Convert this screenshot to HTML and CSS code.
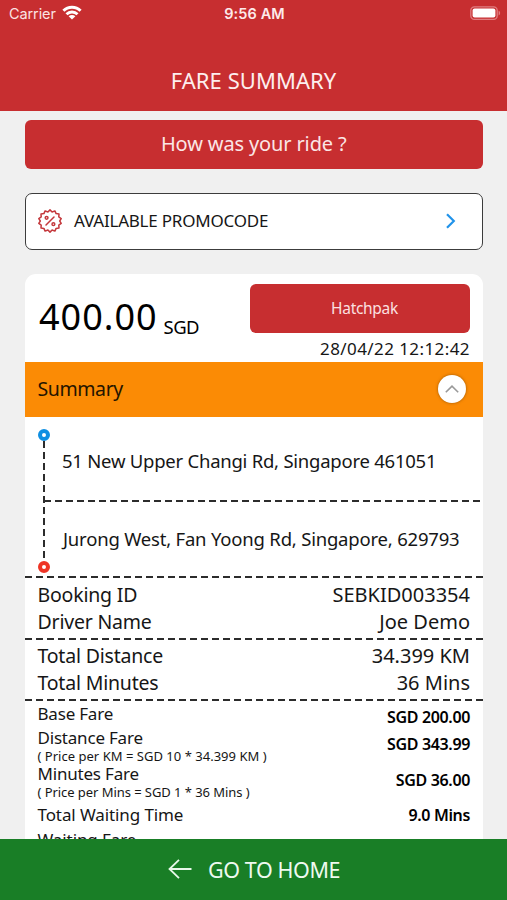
FILE: index.html
```
<!DOCTYPE html>
<html lang="en">
<head>
<meta charset="utf-8">
<title>Fare Summary</title>
<link rel="stylesheet" href="styles.css">
</head>
<body>
<div class="screen">
  <header class="header">
    <div class="status">
      <div class="carrier"><span>Carrier</span>
        <svg width="20" height="15" viewBox="0 0 20 15" fill="none" stroke="#fff" stroke-width="2.9"><path d="M1.4 5.8C6.2 1 13.8 1 18.6 5.8M4.5 9.3C7.6 6.2 12.4 6.2 15.5 9.3"/><path d="M10 14.6 6.6 11.3C8.6 9.5 11.4 9.5 13.4 11.3Z" fill="#fff" stroke="none"/></svg>
      </div>
      <span class="clock">9:56 AM</span>
      <svg class="battery" width="31" height="15" viewBox="0 0 31 15"><rect x=".8" y=".8" width="26.4" height="12.6" rx="3.6" fill="none" stroke="#e07d80" stroke-width="1.3"/><rect x="2.6" y="2.6" width="22.8" height="9" rx="2" fill="#fff"/><path d="M28.6 4.8C30.6 5.4 30.6 8.8 28.6 9.4Z" fill="#e07d80"/></svg>
    </div>
    <h1 class="title">FARE SUMMARY</h1>
  </header>
  <main class="content">
    <button class="rate">How was your ride ?</button>
    <div class="promo">
      <svg width="24" height="24" viewBox="0 0 24 24" fill="none" stroke="#c4383c" stroke-width="1.5" stroke-linejoin="round" stroke-linecap="round"><path d="M12 .9 14.1 3 16.9 1.9 18.1 4.6 21 5 20.8 7.9 23.2 9.6 21.7 12 23.2 14.4 20.8 16.1 21 19 18.1 19.4 16.9 22.1 14.1 21 12 23.1 9.9 21 7.1 22.1 5.9 19.4 3 19 3.2 16.1 .8 14.4 2.3 12 .8 9.6 3.2 7.9 3 5 5.9 4.6 7.1 1.9 9.9 3Z"/><path d="M8 16 16 8"/><circle cx="8.6" cy="8.8" r="1.4"/><circle cx="15.4" cy="15.2" r="1.4"/></svg>
      <span class="promo-label">AVAILABLE PROMOCODE</span>
      <svg width="10" height="16" viewBox="0 0 10 16" fill="none" stroke="#2193ea" stroke-width="2.2"><path d="M1 1.2 7.8 8 1 14.8"/></svg>
    </div>
    <section class="card">
      <div class="total">
        <div class="amount"><span class="figure">400.00</span><span class="currency">SGD</span></div>
        <div class="meta"><div class="vehicle">Hatchpak</div><div class="date">28/04/22 12:12:42</div></div>
      </div>
      <div class="summary"><span>Summary</span>
        <span class="toggle"><svg width="14" height="8" viewBox="0 0 14 8" fill="none" stroke="#999" stroke-width="1.6"><path d="M.8 7.2 7 1.2 13.2 7.2"/></svg></span>
      </div>
      <div class="route">
        <div class="track"><i class="dot from"></i><i class="line"></i><i class="dot to"></i></div>
        <div class="stops">
          <div class="stop first">51 New Upper Changi Rd, Singapore 461051</div>
          <div class="dash"></div>
          <div class="stop second">Jurong West, Fan Yoong Rd, Singapore, 629793</div>
        </div>
      </div>
      <div class="dash"></div>
      <div class="group">
        <div class="row"><span>Booking ID</span><span class="value">SEBKID003354</span></div>
        <div class="row"><span>Driver Name</span><span class="value">Joe Demo</span></div>
      </div>
      <div class="dash"></div>
      <div class="group trip">
        <div class="row"><span>Total Distance</span><span class="value">34.399 KM</span></div>
        <div class="row"><span>Total Minutes</span><span class="value">36 Mins</span></div>
      </div>
      <div class="dash"></div>
      <div class="fares">
        <div class="fare base"><div class="name">Base Fare</div><div class="price">SGD 200.00</div></div>
        <div class="fare detailed"><div><div class="name">Distance Fare</div><div class="note">( Price per KM = SGD 10 * 34.399 KM )</div></div><div class="price">SGD 343.99</div></div>
        <div class="fare detailed"><div><div class="name">Minutes Fare</div><div class="note minutes">( Price per Mins = SGD 1 * 36 Mins )</div></div><div class="price">SGD 36.00</div></div>
        <div class="fare waiting"><div class="name wide">Total Waiting Time</div><div class="price">9.0 Mins</div></div>
        <div class="fare"><div class="name wide">Waiting Fare</div></div>
      </div>
    </section>
  </main>
  <footer class="home">
    <svg width="24" height="20" viewBox="0 0 24 20" fill="none" stroke="#e8f8ea" stroke-width="1.8"><path d="M23.5 10H1.5M11 .8 1.5 10 11 19.2"/></svg>
    <span>GO TO HOME</span>
  </footer>
</div>
</body>
</html>
```
FILE: styles.css
```
* { box-sizing: border-box; }
body { margin: 0; font-family: "Noto Sans", sans-serif; color: #161616; }
svg { display: block; flex: none; }
.screen { width: 507px; height: 900px; display: flex; flex-direction: column; overflow: hidden; background: #f0f0f0; white-space: nowrap; }
.header { height: 110.5px; flex: none; background: #c72e30; color: #fff; }
.status { height: 27px; display: grid; grid-template-columns: 1fr auto 1fr; align-items: center; padding: 0 7px 0 9px; font-family: Inter, sans-serif; font-size: 14.5px; }
.carrier { display: flex; align-items: center; gap: 6px; color: #fbe3e3; letter-spacing: -.1px; }
.carrier svg { margin-top: -2px; }
.clock { font-weight: 600; letter-spacing: .1px; color: #fdeaea; }
.battery { justify-self: end; margin: -1px -1px 0 0; }
.title { margin: 38px 0 0; text-align: center; font-size: 22px; line-height: 30px; font-weight: 400; color: #fdeeee; letter-spacing: .05px; }
.content { flex: 1; min-height: 0; overflow: hidden; padding: 9.5px 24.5px 0 25px; }
.rate { display: block; width: 100%; height: 48.5px; padding: 0; border: 0; border-radius: 6px; background: #c72e30; color: #fbe6e6; font: 20px/48px "Noto Sans", sans-serif; letter-spacing: -.13px; }
.promo { margin-top: 24.5px; height: 56.5px; border: 1.5px solid #3c3c3c; border-radius: 7px; background: #fff; display: flex; align-items: center; padding: 0 26px 0 12px; font-size: 17px; letter-spacing: -.22px; }
.promo-label { flex: 1; padding-left: 12px; margin-top: -1px; }
.card { margin-top: 24.5px; background: #fff; border-radius: 11px 11px 0 0; }
.total { height: 88px; display: flex; justify-content: space-between; padding: 9.5px 12.5px 0 14px; }
.amount { display: flex; align-items: flex-start; color: #000; }
.figure { font-size: 36px; line-height: 50px; letter-spacing: 1px; margin-top: 8px; }
.currency { font-size: 18.5px; line-height: 24px; letter-spacing: -.6px; margin: 31px 0 0 6px; }
.vehicle { width: 220px; height: 49px; padding-left: 9px; border-radius: 6px; background: #c72e30; color: #fbe0e0; text-align: center; font-size: 15.5px; line-height: 48px; letter-spacing: -.3px; }
.date { text-align: right; font-size: 17px; line-height: 31px; letter-spacing: .42px; }
.summary { height: 55px; background: #fb8b05; display: flex; align-items: center; justify-content: space-between; padding: 0 17px 2px 12.5px; font-size: 19.5px; letter-spacing: -.4px; color: #241400; }
.toggle { width: 28px; height: 28px; border-radius: 50%; background: #fff; box-shadow: 0 0 3px rgba(90, 50, 0, .6); display: flex; align-items: center; justify-content: center; }
.route { height: 159px; display: flex; }
.track { width: 13px; margin: 12px 0 3px 12px; display: flex; flex-direction: column; align-items: center; }
.dot { width: 12px; height: 12px; border-radius: 50%; border: 4px solid #0f8fe2; background: #fff; flex: none; }
.dot.to { border: 4.5px solid #ee3425; }
.line { flex: 1; width: 2px; background: repeating-linear-gradient(#2c2c2c 0 7px, transparent 7px 11px); }
.stops { flex: 1; padding-right: 1px; margin-left: -6px; }
.stop { padding-left: 18px; font-size: 18.5px; }
.first { height: 82.5px; line-height: 88px; letter-spacing: -.24px; }
.second { padding-left: 19px; line-height: 74px; letter-spacing: -.2px; }
.dash { height: 2px; background: repeating-linear-gradient(90deg, #2c2c2c 0 7px, transparent 7px 11px); }
.group { height: 60px; padding: 3px 12.5px 0; }
.trip { height: 59px; padding-top: 2px; }
.row { height: 27px; display: flex; justify-content: space-between; font-size: 19.5px; line-height: 27px; letter-spacing: -.2px; }
.value { font-size: 20px; letter-spacing: 0; }
.fares { padding: 1px 12.5px 0; }
.fare { display: flex; justify-content: space-between; }
.name { font-size: 17px; line-height: 24px; letter-spacing: -.2px; }
.wide { letter-spacing: -.1px; }
.note { font-size: 13px; line-height: 12.5px; margin-top: -.5px; letter-spacing: .02px; }
.minutes { letter-spacing: -.06px; }
.price { font-size: 16px; line-height: 24px; font-weight: 600; letter-spacing: -.35px; color: #000; }
.base { height: 24px; }
.base .price { margin-top: 3px; }
.detailed { height: 36px; }
.detailed .price { margin-top: 6px; }
.waiting { height: 29.5px; padding-top: 4.5px; }
.home { height: 61.5px; flex: none; background: #197e26; color: #eefaf0; display: flex; align-items: center; justify-content: center; gap: 16px; padding-left: 1px; font-size: 21.5px; letter-spacing: -.4px; }
```
